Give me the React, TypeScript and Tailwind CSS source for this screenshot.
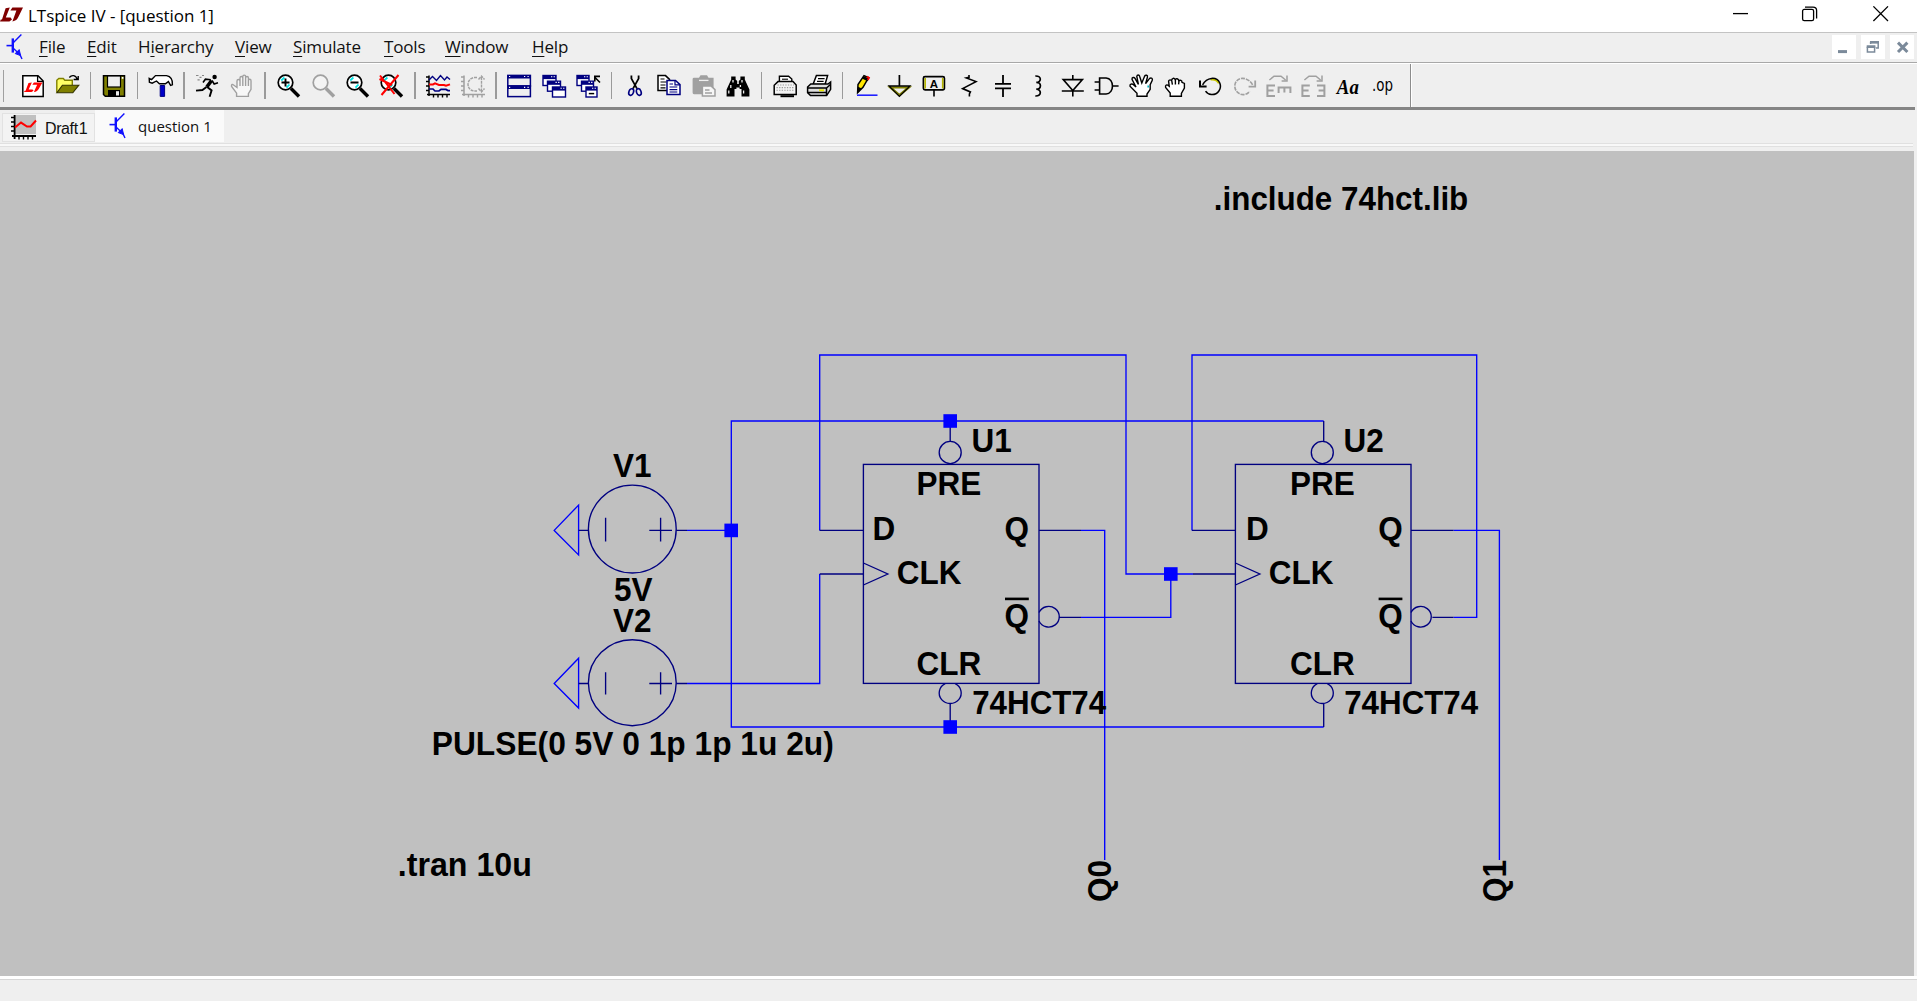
import React from "react";

const K = "#000";
const NAVY = "#000080";
const BLUE = "#0000ff";
const GREY = "#a0a0a0";
const OLIVE = "#808000";

/* Slanted two-part brand mark, 23 x 14.5 */
const Mark = ({ fill }: { fill: string }) => (
  <g fill={fill}>
    <path d="M5.6 1.2L9.8 0.4L5.8 10.6H10.6L12 12.4L9.4 14.4H0L0.8 12.6H2Z" />
    <path d="M10.4 3.6L12.4 0.4H23L18.6 9.6C17.2 12.6 15.6 14 12.4 14.4L16.4 3.6Z" />
  </g>
);

/* ---------- toolbar icons, drawn around a (0,0) centre ---------- */

const Lens = ({ color = K, fill = "#fff", children }: { color?: string; fill?: string; children?: React.ReactNode }) => (
  <g>
    <circle cx="-2.5" cy="-3.5" r="7.3" fill={fill} stroke={color} strokeWidth="1.7" />
    {color === K && <path d="M-6.8-5.5l3.2-3M1.5-1.5l-3 3.2" stroke="#00e5e5" strokeWidth="1.8" />}
    <path d="M3 2.5L11 10.5" stroke={color} strokeWidth="3.4" />
    {children}
  </g>
);

const WindowBox = ({ x, y, w = 13, h = 10 }: { x: number; y: number; w?: number; h?: number }) => (
  <g>
    <rect x={x} y={y} width={w} height={h} fill="#fff" stroke={NAVY} strokeWidth="1.4" />
    <rect x={x} y={y} width={w} height="3.6" fill={NAVY} />
    <path d={`M${x + w - 5} ${y + 1.2}h1.3M${x + w - 2.4} ${y + 1.2}h1.3`} stroke="#fff" strokeWidth="1.1" />
  </g>
);

const PlotAxes = ({ c }: { c: string }) => (
  <g stroke={c} fill="none">
    <path d="M-9-10.5V10M-11 8.5H12" strokeWidth="1.5" />
    <path d="M-12-9h3M-12-4.5h3M-12 0h3M-12 4.5h3M-4.5 8v3.4M0 8v3.4M4.5 8v3.4M9 8v3.4" strokeWidth="1.4" />
  </g>
);

const ICONS: Record<string, React.ReactNode> = {
  new: (
    <g>
      <path d="M-10.2-10.3H5L10.2-5V10.4H-10.2Z" fill="#fff" stroke={K} strokeWidth="1.5" />
      <path d="M4.6-10V-4.6H10" fill="none" stroke={K} strokeWidth="1.3" />
      <g transform="translate(-9 -3.8) scale(0.8 0.68)"><Mark fill="#f00" /></g>
    </g>
  ),
  open: (
    <g transform="translate(0.8 0)">
      <path d="M-11 6.5V-5.8L-9-7.5H-4.5L-3-5.8H4.5V-1" fill="#ffff66" stroke={OLIVE} strokeWidth="1.4" />
      <path d="M-11 6.8L-5.4-0.8H11L5 6.8Z" fill={OLIVE} stroke="#333300" strokeWidth="1.1" />
      <path d="M1.5-8.5C4-11.5 8-11 9.5-6.5M5.8-6.5H10.4V-10" fill="none" stroke={K} strokeWidth="1.4" />
    </g>
  ),
  save: (
    <g>
      <path d="M-10.5-10.3H10.5V10.3H-8.7L-10.5 8.5Z" fill={OLIVE} stroke={K} strokeWidth="1.5" />
      <rect x="-6.5" y="-10" width="13" height="11" fill="#efefef" stroke={K} strokeWidth="1.2" />
      <rect x="-6" y="4" width="12" height="6.5" fill={K} />
      <rect x="2" y="5.2" width="3" height="4.3" fill="#efefef" />
      <rect x="7.8" y="-9" width="1.6" height="1.8" fill="#fff" />
    </g>
  ),
  hammer: (
    <g>
      <path d="M-0.8-0.5H3.6V10.4H-0.8Z" fill="#0000c8" stroke={NAVY} strokeWidth="1" />
      <path d="M-11.8-7.6L-9.4-6.4L-5.5-10.4H5.5C9.8-9.6 11.8-6.4 11.4-1.2L9.6-0.6L7.4-4.4L4.4-2.2H-1.6L-4.5-5L-8.8-2.8L-11.6-3.8Z" fill="#fff" stroke={K} strokeWidth="1.4" />
    </g>
  ),
  run: (
    <g stroke={K} fill="none">
      <circle cx="7.6" cy="-9" r="2.2" fill={K} stroke="none" />
      <path d="M4.6-5.5L-0.2 1" strokeWidth="3.6" />
      <path d="M5-5.5L7.2-2 11-3.2M3.8-6.2L-1.6-6.8L-4-3.6" strokeWidth="1.6" />
      <path d="M0.2 1L4.6 4.4L2.6 10.8M-0.5 1L-4.6 4L-11 4.6" strokeWidth="1.9" />
      <path d="M-11-10.5h2.5M-7.5-8.6h2M-9.5-6.2h2.2M-5-10.5h2" stroke="#888" strokeWidth="1.2" />
    </g>
  ),
  hand: (
    <path
      d="M-5 1.5L-8.8-1.2C-10.2-2.2-11.2-0.2-10 1L-5.4 7.2V10.4H6.4V7.6L9 3.4V-5.2C9-7.2 6.4-7.2 6.4-5.2V0V-8C6.4-10 3.6-10 3.6-8V0V-9.4C3.6-11.4 0.8-11.4 0.8-9.4V0V-8C0.8-10-2-10-2-8V0V-5C-2-7-5-7-5-5Z"
      fill="#f7f7f7" stroke={GREY} strokeWidth="1.4"
    />
  ),
  zin: <Lens><path d="M-6.5-3.5H1.5M-2.5-7.5V0.5" stroke={K} strokeWidth="1.9" /></Lens>,
  zpan: <Lens color={GREY} fill="#f4f4f4" />,
  zout: <Lens><path d="M-6.5-3.5H1.5" stroke={K} strokeWidth="2" /></Lens>,
  zfit: <Lens><path d="M-11-10.5L3.5 8M7.5-11L-9.5 9M-11.5-7L1-1" fill="none" stroke="#f00" strokeWidth="2" /></Lens>,
  plot: (
    <g>
      <PlotAxes c={K} />
      <path d="M-9-6L-5.5-9.5L-1.5-5.5L2.5-10.5L6.5-6L9-9L12-6.5" fill="none" stroke={NAVY} strokeWidth="1.4" />
      <path d="M-9-1.5H-5L-3-2.6L1-1H6L8-0.2L12-1.6" fill="none" stroke="#f00" strokeWidth="2" />
      <path d="M-9 3H-5L-3 5H1L3 3.4H8L10 4.6H12" fill="none" stroke={NAVY} strokeWidth="1.7" />
    </g>
  ),
  plotg: (
    <g>
      <PlotAxes c={GREY} />
      <path d="M4-8.5H1C-7-7-7 4 1 5H4M8.5-9V6M5.5-6.5L8.5-10 11.5-6.5M5.5 2.5L8.5 6 11.5 2.5" fill="none" stroke={GREY} strokeWidth="1.4" strokeDasharray="3 0.8" />
    </g>
  ),
  tile: (
    <g>
      <rect x="-11.2" y="-10.6" width="22.6" height="10.6" fill="#efefef" stroke={NAVY} strokeWidth="1.5" />
      <rect x="-11.2" y="0" width="22.6" height="10.6" fill="#efefef" stroke={NAVY} strokeWidth="1.5" />
      <path d="M-11.2-9.3H11.4M-11.2 1.4H11.4" stroke={NAVY} strokeWidth="3.4" />
      <path d="M-10-9.5h1.2M5-9.5h1.2M8.5-9.5h1.2M-10 1.3h1.2M5 1.3h1.2M8.5 1.3h1.2" stroke="#fff" strokeWidth="1.2" />
    </g>
  ),
  casc: (
    <g>
      <WindowBox x={-11} y={-10.5} />
      <WindowBox x={-6.5} y={-4.8} />
      <WindowBox x={-1.5} y={1} />
    </g>
  ),
  close: (
    <g>
      <WindowBox x={-11} y={-10.5} w={12} />
      <WindowBox x={-6.5} y={-4.8} w={12} />
      <WindowBox x={-2} y={1} w={11} />
      <path d="M12-3.5L6.5-9M6.8-4.5V-9.6H12" fill="none" stroke={K} strokeWidth="1.6" />
      <path d="M0.8 7.6h5.4" stroke={K} strokeWidth="1.5" />
    </g>
  ),
  cut: (
    <g fill="none">
      <path d="M-3.6-10.6V-7.4L2 2.6M3.6-10.6V-7.4L-2 2.6" stroke={K} strokeWidth="1.8" />
      <ellipse cx="-3.8" cy="6" rx="2.3" ry="3.4" stroke={NAVY} strokeWidth="1.6" transform="rotate(20 -3.8 6)" />
      <ellipse cx="3.8" cy="6" rx="2.3" ry="3.4" stroke={NAVY} strokeWidth="1.6" transform="rotate(-20 3.8 6)" />
    </g>
  ),
  copy: (
    <g>
      <path d="M-11-10.4H-3.5L0.5-6.6V4.4H-11Z" fill="#fff" stroke={K} strokeWidth="1.5" />
      <path d="M-8.5-7h4M-8.5-4h6M-8.5-1h5M-8.5 1.8h5" stroke={K} strokeWidth="1.2" />
      <path d="M-2-5.6H6.5L11-1.4V8.4H-2Z" fill="#fff" stroke={NAVY} strokeWidth="1.5" />
      <path d="M6-5.4V-1.2H11M0.5-2h3.5M0.5 1h7.8M0.5 3.6h7.8M0.5 6h7.8" fill="none" stroke={NAVY} strokeWidth="1.2" />
    </g>
  ),
  paste: (
    <g>
      <path d="M-10-8.2H-5L-3.5-10.8H3L4.5-8.2H9.6V8.2H-10Q-11.4 8.2-11.4 6.5V-6.8Q-11.4-8.2-10-8.2Z" fill={GREY} />
      <path d="M-5-5.6H4.5" stroke="#efefef" strokeWidth="1.3" />
      <path d="M-1.6 0H7L11 3.6V10H-1.6Z" fill="#f6f6f6" stroke={GREY} strokeWidth="1.5" />
      <path d="M1 4h4.5M1 7h7" stroke={GREY} strokeWidth="1.3" />
    </g>
  ),
  find: (
    <g fill={K}>
      <path d="M-6.8-9.5H-2.4V-6.5L-0.8-5V-2H0.8V-5L2.4-6.5V-9.5H6.8V-6.5L11.4 3.4V10.4H3.5V3H1.6V1.6H-1.6V3H-3.5V10.4H-11.4V3.4L-6.8-6.5Z" />
      <path d="M-5-6v2.5M-7.2-1v3M-9.2 4.5v3M4-6v2.5M2.4-1v2M5.6 4.5v3" stroke="#efefef" strokeWidth="1.3" />
    </g>
  ),
  print: (
    <g>
      <path d="M-5.6-3.5V-9.8H3.6L6.8-7V-3.5" fill="#fff" stroke={K} strokeWidth="1.4" />
      <path d="M-3-6.8h6" stroke={K} strokeWidth="1.1" />
      <path d="M-7-4.4H8L11.2-1V8.6H-10.8V-0.8Z" fill="#f3f3f3" stroke={K} strokeWidth="1.5" />
      <path d="M-7.5-1H9M-8.5 1.6H9M-8.5 4.2H9" stroke="#999" strokeWidth="1.1" strokeDasharray="1.3 1.3" />
      <path d="M-4.5 10.2H9" stroke={K} strokeWidth="2" />
    </g>
  ),
  printer: (
    <g>
      <path d="M-6-1.5L-2.6-10.4H8.6L6-1.5Z" fill="#fff" stroke={K} strokeWidth="1.5" />
      <path d="M-1-7.4H5.6M-2-4.6H4.6" stroke={K} strokeWidth="1.3" />
      <path d="M-11.4 1L-8.2-2H9L11.6-4V3.4L7.6 9.6H-8.5L-11.4 6.6Z" fill="#ddd" stroke={K} strokeWidth="1.5" />
      <path d="M-11 2H7.5L11.4-1.5M-11 6.4H7.5M7.5 2V9.4" fill="none" stroke={K} strokeWidth="1.5" />
      <path d="M0 4.3h5" stroke="#e8e800" strokeWidth="1.8" />
    </g>
  ),
  wire: (
    <g>
      <path d="M-8.4 6.6L-8-1.5L-2-10.4L2.6-8.4L-3 1.4Z" fill="#ffe600" stroke={K} strokeWidth="1.5" />
      <path d="M-8.4 7.4V0.5L-4.4 2.6Z" fill={K} />
      <path d="M-2.6-10L2.8-7.4L1.4-4.8L-3.9-7.6Z" fill={K} />
      <path d="M0.8-9.6L3-8.2L1.8-6" stroke="#f00" strokeWidth="1.8" fill="none" />
      <path d="M-9 9.2H11.5" stroke="#2020ff" strokeWidth="1.6" />
    </g>
  ),
  gnd: (
    <g fill="none">
      <path d="M-0.6-11V0" stroke={K} strokeWidth="1.7" />
      <path d="M-9.6 1.4H8.8L-0.6 9.2Z" fill="#efefef" stroke={OLIVE} strokeWidth="2.4" />
      <path d="M-11 0H10L-0.6 10.4Z" stroke={K} strokeWidth="1.3" />
    </g>
  ),
  label: (
    <g>
      <rect x="-10.6" y="-9.4" width="21" height="13.2" rx="1.6" fill="#efefef" stroke={K} strokeWidth="1.7" />
      <path d="M-8.8-8V2.4M8.7-8V2.4" stroke="#b5b500" strokeWidth="1.6" />
      <path d="M0 4V10.6" stroke={K} strokeWidth="1.6" />
      <text x="0" y="1.7" textAnchor="middle" fontSize="11.5" fontWeight="700" fontFamily="Liberation Sans, sans-serif">A</text>
    </g>
  ),
  res: <path d="M0-11V-8.6L-2.6-8L7-4.4L-6.4 2.6L1.4 6L0.4 8V10.6" fill="none" stroke={K} strokeWidth="1.6" />,
  cap: <path d="M0-11V-2M-8-2.2H8M-8 2.4H8M0 2.4V11" fill="none" stroke={K} strokeWidth="1.8" />,
  ind: <path transform="translate(-1.2 0.4)" d="M-1.5-10.4C5-10.6 5-4.2-0.5-4C5-4 5 2.6-0.5 2.8C5 3 5 9.8-1.5 9.6" fill="none" stroke={K} strokeWidth="1.7" />,
  diode: <path transform="translate(0.8 0)" d="M0-11V-6.4M-9.6-6.4H9.6L0 4.6ZM-11 5H11M0 5V10.6" fill="none" stroke={K} strokeWidth="1.6" />,
  gate: <path transform="translate(0.6 0)" d="M-7-8H-0.5C8-7.6 8 7.6-0.5 8H-7ZM-12-4H-7M-12 4H-7M6 0H12" fill="none" stroke={K} strokeWidth="1.6" />,
  move: (
    <g transform="translate(0.6 0)">
      <path
        d="M-4.6 10.2V7.2L-11.6 0.2C-12-2-9.6-2.6-8.4-1.4L-5.6 1L-9.6-6.6C-9.8-8.8-7.4-9-6.6-7.6L-3.2-1.6L-4.8-9.6C-4.4-11.6-2.4-11.4-2-9.8L0.2-3L3-9.8C4-11.6 6.4-10.8 5.8-8.8L4-2.4L8-7.6C9.6-8.8 11.4-7.4 10.6-5.6L8.6-1.4V3.4L5.4 8V10.2Z"
        fill="#fff" stroke={K} strokeWidth="1.4"
      />
      <path d="M6.6-0.5v2" stroke="#00b7c8" strokeWidth="1.6" />
    </g>
  ),
  drag: (
    <path
      d="M-4.8 10.2V7L-9.4 1.4C-10-1-8-1.6-6.8-0.6L-5.8 0.2L-6.4-5C-5.8-6.6-3.8-6.4-3.4-5C-3.4-8-0.4-8.6 0.2-6.2C0.8-8 3.6-7.6 3.8-5C5-6.4 7.2-5.6 7-3.6L9.4-2.6V2L6.4 7.4V10.2ZM-3.2-4.8L-2.6-1.4M0.4-6V-1.6M4-5L3.6-1.6"
      fill="#fff" stroke={K} strokeWidth="1.4"
    />
  ),
  undo: (
    <g fill="none" stroke={K} transform="translate(0.6 0)">
      <path d="M0-6.6C3.5-7 7-5.6 8.4-2.6" stroke="#c8c800" strokeWidth="2.2" />
      <path d="M-8-1.2C-3.8-8.8 5.8-10 9.2-3C11.4 2.4 7.4 9 0.8 8.6C-1.4 8.4-3.8 7.2-5 5.2" strokeWidth="1.5" />
      <path d="M-10.6-5.6V0.6H-4" strokeWidth="2" />
    </g>
  ),
  redo: (
    <g fill="none" stroke={GREY} transform="translate(0.6 0)">
      <path d="M8-1.2C3.8-8.8-5.8-10-9.2-3C-11.4 2.4-7.4 9-0.8 8.6C1.4 8.4 3.8 7.2 5 5.2" strokeWidth="1.6" strokeDasharray="4 1" />
      <path d="M10.6-5.6V0.6H4" strokeWidth="1.8" />
    </g>
  ),
  mirrorV: (
    <g fill="none" stroke={GREY}>
      <path d="M-8.6-6L-4-9.8H3L7.6-6M9-10.4V-5H3.6" strokeWidth="1.5" />
      <path d="M-3-0.6H-10.6V10H-3M-10.6 4.6H-4.4M0.6 7V1.4H12.4V7M6.4 1.4V6.4" strokeWidth="2" />
    </g>
  ),
  mirrorH: (
    <g fill="none" stroke={GREY}>
      <path d="M-8.6-6L-4-9.8H3L7.6-6M9-10.4V-5H3.6" strokeWidth="1.5" />
      <path d="M-3.2-0.6H-10.6V10H-3.2M-10.6 4.6H-4.4M4-0.6H11.4V10H4M11.4 4.6H5.6" strokeWidth="2" />
    </g>
  ),
  text: (
    <text x="0.8" y="7.6" textAnchor="middle" fontSize="20" fontWeight="700" fontStyle="italic" fontFamily="Liberation Serif, serif" textLength="22" lengthAdjust="spacingAndGlyphs">Aa</text>
  ),
  op: (
    <text x="0.6" y="4.6" textAnchor="middle" fontSize="17" fontFamily="DejaVu Sans, sans-serif" textLength="21" lengthAdjust="spacingAndGlyphs">.op</text>
  ),
};

const GROUPS: string[][] = [
  ["new", "open"],
  ["save"],
  ["hammer"],
  ["run", "hand"],
  ["zin", "zpan", "zout", "zfit"],
  ["plot", "plotg"],
  ["tile", "casc", "close"],
  ["cut", "copy", "paste", "find"],
  ["print", "printer"],
  ["wire", "gnd", "label", "res", "cap", "ind", "diode", "gate", "move", "drag", "undo", "redo", "mirrorV", "mirrorH", "text", "op"],
];

const Transistor = () => (
  <svg width="18" height="26" viewBox="0 0 18 26" className="shrink-0" fill="none" stroke="#1010ff">
    <path d="M0.5 11.6H6.5" strokeWidth="1.6" />
    <path d="M6.8 4.4V18.6" strokeWidth="2.4" />
    <path d="M7 9L15.4 0.6M7 14L14 20.6L16 25" strokeWidth="1.4" />
    <path d="M9.2 19.6L14.6 21.6L13.2 15.6Z" fill="#1010ff" strokeWidth="1" />
  </svg>
);

const MENU: [string, string, string, string][] = [
  ["", "F", "ile", "w-[48px]"],
  ["", "E", "dit", "w-[51px]"],
  ["H", "i", "erarchy", "w-[97px]"],
  ["", "V", "iew", "w-[58px]"],
  ["", "S", "imulate", "w-[91px]"],
  ["", "T", "ools", "w-[61px]"],
  ["", "W", "indow", "w-[87px]"],
  ["", "H", "elp", "w-[60px]"],
];

/* ---------- schematic ---------- */

const SQUEEZE = 0.96;

/* Narrowed bold label; w is the drawn advance width */
const Label = ({ x, y, w, children }: { x: number; y: number; w?: number; children: string }) => (
  <text
    transform={`translate(${x} ${y}) scale(${SQUEEZE} 1)`}
    textLength={w === undefined ? undefined : w / SQUEEZE}
    lengthAdjust="spacingAndGlyphs"
  >
    {children}
  </text>
);

const Node = ({ x, y }: { x: number; y: number }) => (
  <rect x={x - 6.8} y={y - 6.8} width="13.6" height="13.6" fill={BLUE} />
);

const Source = ({ cy, y, ry, minus }: { cy: number; y: number; ry: number; minus: [number, number] }) => (
  <g fill="none" strokeWidth="1.35">
    <path d={`M554.2 ${y}L578.6 ${y - 25.3}V${y + 24.5}Z`} stroke={BLUE} />
    <g stroke={NAVY}>
      <ellipse cx="632.3" cy={cy} rx="43.9" ry={ry} />
      <path d={`M578.6 ${y}H588.4M676.2 ${y}H687M605.6 ${minus[0]}V${minus[1]}M649.3 ${y}H672M660.6 ${minus[0]}V${minus[1]}`} />
    </g>
  </g>
);

const FlipFlop = ({ x, cx, qx, d, name }: { x: number; cx: number; qx: number; d: number; name: string }) => (
  <g>
    <g fill="none" stroke={NAVY} strokeWidth="1.35">
      <rect x={x} y="463.4" width="175.6" height="219" />
      <ellipse cx={cx} cy="451.5" rx="11" ry="11.1" />
      <path d={`M${cx - 5} 682.6A11 10.5 0 1 0 ${cx + 5} 682.6`} />
      <path d={`M${x + 175.6} 611.5A10.6 10.3 0 1 1 ${x + 175.6} 620`} />
      <path d={`M${x} 562L${x + 24.4} 573L${x} 584`} />
    </g>
    <g>
      <Label x={x + 108} y={450.6}>{name}</Label>
      <Label x={x + 53.2 + d} y={494.2}>PRE</Label>
      <Label x={x + 9.2 + d} y={539.2}>D</Label>
      <Label x={qx} y={539.2}>Q</Label>
      <Label x={x + 33.4} y={582.6}>CLK</Label>
      <Label x={qx} y={625.8}>Q</Label>
      <rect x={qx + 0.4} y="596.6" width="23.8" height="2.6" />
      <Label x={x + 53.2 + d} y={674.3}>CLR</Label>
      <Label x={x + 108.8} y={713.2} w={134}>74HCT74</Label>
    </g>
  </g>
);

const Schematic = () => (
  <svg className="block h-[825px] w-[1914px]" viewBox="0 150 1914 825" fontFamily="'Liberation Sans', Arial, sans-serif" fontWeight="700" fontSize="32.8">
    <g fill="none" stroke={BLUE} strokeWidth="1.35">
      <path d="M1323.7 420H731.3V726H1323.7" />
      <path d="M687 529.4H731.3M687 682.5H819.7V573" />
      <path d="M819.7 529.4V354H1126V573H1193M1170.8 573V616.4H1081" />
      <path d="M1081 529.4H1104.7V859" />
      <path d="M1192 529.4V354H1476.7V616.4H1453.5M1453.5 529.4H1499.4V859" />
    </g>
    <g fill="none" stroke={NAVY} strokeWidth="1.35">
      <path d="M819.7 529.4H863.4M819.7 573H863.4M1039 529.4H1081M1059 616.4H1081M950.2 426V440.4M950.2 702.4V720" />
      <path d="M1192 529.4H1235.4M1193 573H1235.4M1411 529.4H1453.5M1432.4 616.4H1453.5M1323.7 420V440.6M1323.7 702.4V726" />
    </g>
    <Source cy={528.1} y={529.4} ry={43.9} minus={[516.7, 540.4]} />
    <Source cy={681.7} y={682.5} ry={43} minus={[671.3, 693.5]} />
    <FlipFlop x={863.4} cx={950.2} qx={1004.6} d={0} name="U1" />
    <FlipFlop x={1235.4} cx={1322.3} qx={1378.2} d={1.4} name="U2" />
    <Node x={731.2} y={529.4} />
    <Node x={950.2} y={420} />
    <Node x={950.2} y={726} />
    <Node x={1170.8} y={573} />
    <Label x={613} y={476.2}>V1</Label>
    <Label x={614} y={600.2}>5V</Label>
    <Label x={613} y={630.6}>V2</Label>
    <Label x={431.8} y={753.7} w={402}>PULSE(0 5V 0 1p 1p 1u 2u)</Label>
    <Label x={397.8} y={875.3} w={134}>.tran 10u</Label>
    <Label x={1213.8} y={209.4} w={254.5}>.include 74hct.lib</Label>
    <text transform="translate(1111.4 901) rotate(-90) scale(0.96 1)">Q0</text>
    <text transform="translate(1506.4 901) rotate(-90) scale(0.96 1)">Q1</text>
  </svg>
);

export default function App() {
  return (
    <div className="flex h-[1001px] w-[1917px] flex-col overflow-hidden bg-[#efefef] font-['Open_Sans',sans-serif] text-[#111]">
      <header className="flex h-8 shrink-0 items-center bg-white">
        <svg width="23" height="15" viewBox="0 0 23 15" className="mt-[-4px]">
          <Mark fill="#800000" />
        </svg>
        <span className="ml-[5px] text-[17px] leading-8 tracking-[-0.05px] text-black">LTspice IV - [question 1]</span>
        <svg className="ml-auto mr-[28px] mt-[-4px]" width="156" height="16" viewBox="0 0 156 16" fill="none" stroke="#000" strokeWidth="1.3">
          <path d="M0 7.6H15" />
          <rect x="69.6" y="3.4" width="11" height="11.2" rx="1.6" />
          <path d="M72 1.2H80Q83.6 1.2 83.6 4.6V12.4" />
          <path d="M140.4 0.4L155 15M155 0.4L140.4 15" />
        </svg>
      </header>

      <nav className="flex h-[30px] shrink-0 items-center border-t border-[#c3c3c3] pb-[2px] text-[17px] tracking-[-0.15px]">
        <div className="ml-[6px] mr-[15px] flex"><Transistor /></div>
        {MENU.map(([a, u, b, w]) => (
          <span key={u + b} className={`${w} whitespace-nowrap`}>
            {a}<span className="underline underline-offset-[3px]">{u}</span>{b}
          </span>
        ))}
        <div className="ml-auto mr-[3px] flex gap-[5px]">
          <div className="flex size-6 items-center justify-center bg-white">
            <svg width="24" height="24" viewBox="0 0 24 24"><path d="M6 16.6H15" stroke="#7b8a9a" strokeWidth="3" /></svg>
          </div>
          <div className="flex size-6 items-center justify-center bg-white">
            <svg width="24" height="24" viewBox="0 0 24 24" fill="none" stroke="#7b8a9a"><path d="M9.6 9V7.4H17.2V13H15M6.4 11.8V17H13.6V11.8" strokeWidth="1.5" /><path d="M9 7.2H18M5.7 11.6H14.4" strokeWidth="2.6" /></svg>
          </div>
          <div className="flex size-6 items-center justify-center bg-white">
            <svg width="24" height="24" viewBox="0 0 24 24"><path d="M8 7.6L17.4 17M17.4 7.6L8 17" stroke="#7b8a9a" strokeWidth="3" /></svg>
          </div>
        </div>
      </nav>

      <div className="flex h-[45px] shrink-0 items-stretch border-t border-[#a8a8a8]">
        <div className="flex flex-1 items-center border-t border-white">
          <div className="mr-[11.6px] h-8 w-1 border-r border-[#a0a0a0]" />
          {GROUPS.map((g, i) => (
            <React.Fragment key={i}>
              {i > 0 && <div className="flex w-[12.3px] shrink-0 justify-center"><div className="h-[27px] w-[1.4px] bg-[#9a9a9a]" /></div>}
              {g.map((n) => (
                <div key={n} className="flex w-[34.4px] shrink-0 justify-center">
                  <svg width="24" height="24" viewBox="-12 -12 24 24" className="overflow-visible">{ICONS[n]}</svg>
                </div>
              ))}
            </React.Fragment>
          ))}
          <div className="ml-[11px] w-[2px] self-stretch border-l border-[#8c8c8c] bg-white" />
        </div>
      </div>

      <div className="mr-[2px] flex h-[43.5px] shrink-0 flex-col border-t-[3px] border-[#858585]">
        <div className="flex h-[33px] items-start pl-[2px]">
          <div className="mt-[3px] flex h-[29px] w-[93px] items-center border border-[#e2e2e2] bg-[#f3f3f3] pl-[8px]">
            <svg width="26" height="25" viewBox="0 0 26 25" className="shrink-0">
              <rect x="4" y="0" width="21" height="19" fill="#c0c0c0" />
              <path d="M3.6 0V24M1 21H25" stroke="#000" strokeWidth="1.8" />
              <path d="M0 2.5h3M0 7h3M0 11.5h3M0 16h3M8 20v4.5M12.5 20v4.5M17 20v4.5M21.5 20v4.5" stroke="#000" strokeWidth="1.4" />
              <path d="M4 12.5L10 7.6L16 11.5H19.6L25 5.5" fill="none" stroke="#f00" strokeWidth="2" />
            </svg>
            <span className="ml-[8px] mt-[3px] font-['Liberation_Sans',sans-serif] text-[16px] tracking-[-0.4px] whitespace-nowrap [word-spacing:-3px]">Draft 1</span>
          </div>
          <div className="flex h-[32px] w-[129px] items-center bg-[#fafafa] pl-[14px]">
            <Transistor />
            <span className="ml-[11px] text-[15px] whitespace-nowrap">question 1</span>
          </div>
        </div>
        <div className="mr-[2px] h-[4px] border-y border-[#e0e0e0] bg-[#f8f8f8]" />
      </div>

      <main className="h-[825px] w-[1914px] shrink-0 bg-[#c0c0c0]">
        <Schematic />
      </main>

      <footer className="flex-1 border-t-[3px] border-white">
        <div className="border-t border-[#d6d6d6]" />
      </footer>
    </div>
  );
}
